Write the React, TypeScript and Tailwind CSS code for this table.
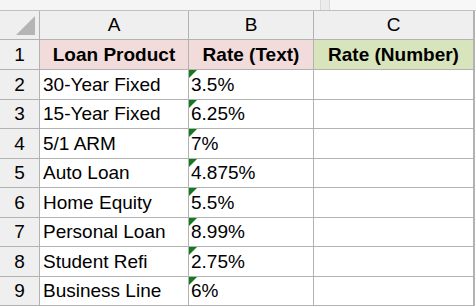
const rows: { num: number; product: string; rate: string; h: string }[] = [
  { num: 2, product: "30-Year Fixed", rate: "3.5%", h: "h-[29px]" },
  { num: 3, product: "15-Year Fixed", rate: "6.25%", h: "h-[28px]" },
  { num: 4, product: "5/1 ARM", rate: "7%", h: "h-[29px]" },
  { num: 5, product: "Auto Loan", rate: "4.875%", h: "h-[28px]" },
  { num: 6, product: "Home Equity", rate: "5.5%", h: "h-[29px]" },
  { num: 7, product: "Personal Loan", rate: "8.99%", h: "h-[28px]" },
  { num: 8, product: "Student Refi", rate: "2.75%", h: "h-[29px]" },
  { num: 9, product: "Business Line", rate: "6%", h: "h-[28px]" },
];

function TextFlag() {
  return (
    <svg className="absolute left-0 top-0" width="8" height="8" viewBox="0 0 8 8">
      <polygon points="0,0 8,0 0,8" fill="#137a1f" />
    </svg>
  );
}

export default function App() {
  return (
    <div
      className="w-[476px] h-[307px] overflow-hidden bg-white text-black"
      style={{ fontFamily: '"Liberation Sans", Arial, sans-serif' }}
    >
      {/* formula bar remnant */}
      <div className="flex h-[11px] border-b border-[#c0c0c0] bg-[#f3f3f3]">
        <div className="w-[320px] bg-[#f5f5f5]" />
        <div className="w-[10px] border-x border-[#dadada] bg-[#ececec]" />
        <div className="flex-1 bg-[#f7f7f7]" />
      </div>

      <div className="w-[475px] bg-[#b2b2b2] pr-px pb-px">
        <div className="grid grid-cols-[39px_148px_124px_159px] gap-px">
          {/* column headers */}
          <div className="relative h-[28px] bg-[#efefef]">
            <svg className="absolute right-[4px] bottom-[4px]" width="19" height="19" viewBox="0 0 19 19">
              <polygon points="19,0 19,19 0,19" fill="#b5b5b5" />
            </svg>
          </div>
          <div className="flex h-[28px] items-center justify-center bg-[#efefef] pt-px text-[19px]">A</div>
          <div className="flex h-[28px] items-center justify-center bg-[#efefef] pt-px text-[19px]">B</div>
          <div className="flex h-[28px] items-center justify-center bg-[#efefef] pt-px text-[19px]">C</div>

          {/* row 1 */}
          <div className="flex h-[29px] items-center justify-center bg-[#efefef] pt-px text-[19px]">1</div>
          <div className="flex h-[29px] items-center justify-center bg-[#f2dcdb] pt-px text-[19px] font-bold">
            Loan Product
          </div>
          <div className="flex h-[29px] items-center justify-center bg-[#f2dcdb] pt-px text-[19px] font-bold">
            Rate (Text)
          </div>
          <div className="flex h-[29px] items-center justify-center bg-[#d8e4bc] pt-px text-[19px] font-bold">
            Rate (Number)
          </div>

          {rows.map((r) => (
            <div key={r.num} className="contents">
              <div className={`flex ${r.h} items-center justify-center bg-[#efefef] pt-px text-[19px]`}>{r.num}</div>
              <div className={`flex ${r.h} items-center bg-white pl-[3px] pt-px text-[19px]`}>{r.product}</div>
              <div className={`relative flex ${r.h} items-center bg-white pl-[2px] pt-px text-[19px]`}>
                <TextFlag />
                {r.rate}
              </div>
              <div className={`${r.h} bg-white`} />
            </div>
          ))}
        </div>
      </div>
    </div>
  );
}
